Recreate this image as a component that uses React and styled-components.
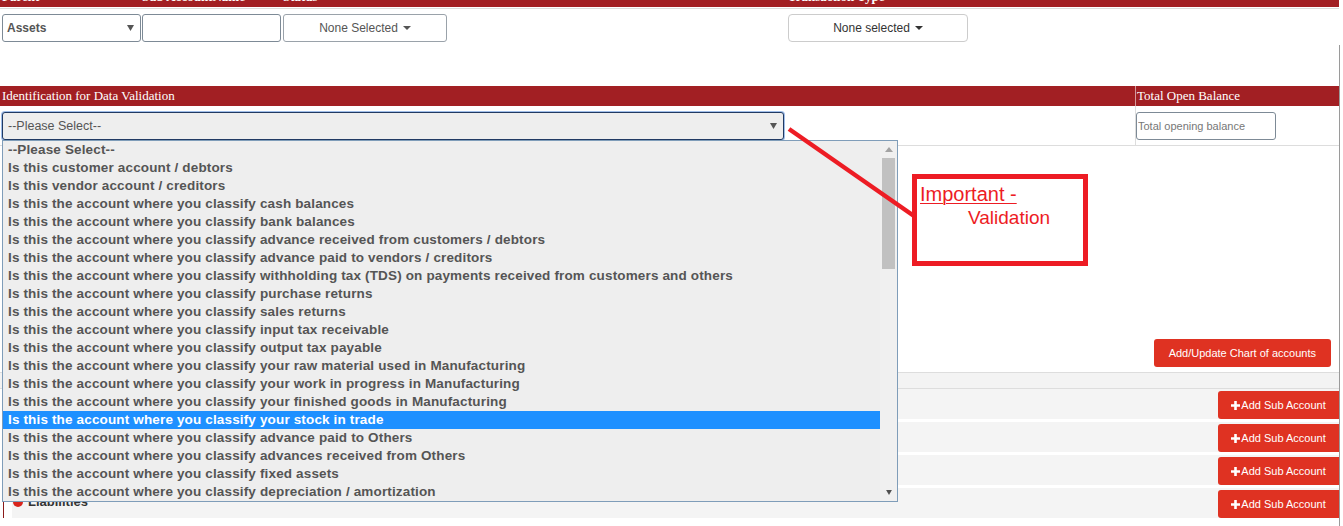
import React from "react";
import styled, { createGlobalStyle } from "styled-components";

const RED_BAR = "#a21f23";
const BTN_RED = "#df3222";
const ANNO = "#ed1c24";

const GlobalStyle = createGlobalStyle`
  html, body { margin: 0; padding: 0; background: #fff; }
  body { font-family: "Liberation Sans", Arial, sans-serif; overflow: hidden; }
  * { box-sizing: border-box; }
`;

const Page = styled.div`
  display: flex;
  width: 1343px;
  height: 526px;
  overflow: hidden;
`;

const Main = styled.div`
  position: relative;
  width: 1339px;
  flex: none;
`;

const Edge = styled.div`
  flex: 1;
  margin-top: 45px;
  border-left: 1px solid #9a9a9a;
`;

const TopHeader = styled.div`
  display: grid;
  grid-template-columns: 140px 141px 505px 1fr;
  height: 7px;
  padding-left: 2px;
  background: ${RED_BAR};
  overflow: hidden;
`;

const HeadLabel = styled.div`
  margin-top: -10px;
  font-family: "Liberation Serif", "Times New Roman", serif;
  font-size: 13px;
  font-weight: bold;
  line-height: 13px;
  color: #fff;
  white-space: nowrap;
`;

const FilterRow = styled.div`
  display: grid;
  grid-template-columns: 140px 141px 505px 1fr;
  align-items: start;
  margin-top: 1px;
  padding: 5px 0 44px 2px;
  border-top: 1px solid #dcdcdc;
`;

const SelectBox = styled.div`
  display: flex;
  align-items: center;
  justify-content: space-between;
  width: 139px;
  height: 28px;
  padding: 0 6px 0 4px;
  border: 1px solid #7d8a96;
  border-radius: 3px;
  background: #fff;
  font-size: 12px;
  font-weight: bold;
  color: #555;
`;

const TextInput = styled.input`
  width: 139px;
  height: 28px;
  border: 1px solid #7d8a96;
  border-radius: 3px;
  background: #fff;
  outline: none;
`;

const MultiButton = styled.button`
  display: flex;
  align-items: center;
  justify-content: center;
  width: ${(p) => p.$width}px;
  height: 28px;
  padding: 0;
  border: 1px solid ${(p) => (p.$dark ? "#cccccc" : "#9aa2aa")};
  border-radius: ${(p) => (p.$dark ? 4 : 3)}px;
  background: #fff;
  font-family: "Liberation Sans", Arial, sans-serif;
  font-size: 12px;
  color: ${(p) => (p.$dark ? "#333" : "#555")};
`;

const Caret = styled.span`
  display: inline-block;
  width: 0;
  height: 0;
  margin-left: 5px;
  border-top: 4px solid currentColor;
  border-left: 4px solid transparent;
  border-right: 4px solid transparent;
`;

const SectionBar = styled.div`
  display: grid;
  grid-template-columns: 1135px 1fr;
  height: 20px;
  background: ${RED_BAR};
  color: #fff;
  font-family: "Liberation Serif", "Times New Roman", serif;
  font-size: 13px;
  line-height: 20px;
`;

const SectionCell = styled.div`
  padding-left: ${(p) => (p.$divider ? 1 : 2)}px;
  border-left: ${(p) => (p.$divider ? "1px solid rgba(255,255,255,0.55)" : "none")};
  white-space: nowrap;
`;

const ValidationRow = styled.div`
  display: grid;
  grid-template-columns: 1135px 1fr;
  border-bottom: 1px solid #dddddd;
`;

const ValidationCell = styled.div`
  position: relative;
  padding: 6px 0 5px 2px;
`;

const BalanceCell = styled.div`
  padding: 6px 0 5px 0;
  border-left: 1px solid #dddddd;
`;

const FocusSelect = styled.div`
  display: flex;
  align-items: center;
  justify-content: space-between;
  width: 782px;
  height: 28px;
  padding: 0 6px 0 5px;
  border: 1px solid #213a63;
  border-radius: 3px;
  background: #eeeeee;
  box-shadow: 0 0 0 1px rgba(128, 168, 225, 0.75);
  font-size: 12.5px;
  color: #555;
`;

const BalanceInput = styled.input`
  width: 140px;
  height: 28px;
  padding: 0 0 0 1px;
  border: 1px solid #7d8a96;
  border-radius: 3px;
  font-family: "Liberation Sans", Arial, sans-serif;
  font-size: 11px;
  outline: none;
  &::placeholder { color: #777; }
`;

const OptionList = styled.div`
  position: absolute;
  left: 2px;
  top: 34px;
  z-index: 5;
  display: flex;
  width: 896px;
  height: 362px;
  border: 1px solid #7f9db9;
  background: #eeeeee;
`;

const Options = styled.ul`
  flex: 1;
  margin: 0;
  padding: 0;
  list-style: none;
  overflow: hidden;
`;

const Option = styled.li`
  height: 18px;
  padding-left: 5px;
  line-height: 18px;
  font-size: 13.5px;
  font-weight: bold;
  letter-spacing: 0.15px;
  white-space: nowrap;
  color: ${(p) => (p.$selected ? "#fff" : "#555")};
  background: ${(p) => (p.$selected ? "#1e90ff" : "transparent")};
`;

const ScrollBar = styled.div`
  display: flex;
  flex-direction: column;
  width: 17px;
  background: #f0f0f0;
`;

const ScrollArrow = styled.div`
  display: flex;
  align-items: center;
  justify-content: center;
  height: 17px;
  color: ${(p) => (p.$dim ? "#a3a3a3" : "#505050")};
`;

const ScrollTrack = styled.div`
  flex: 1;
`;

const ScrollThumb = styled.div`
  height: 111px;
  margin: 0 2px;
  background: #c1c1c1;
`;

const Toolbar = styled.div`
  display: flex;
  justify-content: flex-end;
  padding: 193px 8px 5px 0;
  border-bottom: 1px solid #dddddd;
`;

const PrimaryButton = styled.button`
  height: 28px;
  padding: 0 15px;
  border: none;
  border-radius: 3px;
  background: ${BTN_RED};
  color: #fff;
  font-family: "Liberation Sans", Arial, sans-serif;
  font-size: 11px;
`;

const TreeHead = styled.div`
  height: 16px;
  background: #f3f3f3;
  border-bottom: 1px solid #dddddd;
`;

const TreeBody = styled.div`
  display: flex;
  flex-direction: column;
  gap: 3px;
  margin-left: 3px;
  padding-left: 8px;
  border-left: 1px solid #8b1a1a;
`;

const TreeRow = styled.div`
  display: flex;
  justify-content: space-between;
  align-items: flex-start;
  height: 30px;
  padding-top: 2px;
  background: #f4f4f4;
`;

const TreeLabel = styled.div`
  display: flex;
  align-items: center;
  gap: 5px;
  margin-top: 4px;
  padding-left: 1px;
  font-size: 13px;
  font-weight: bold;
  line-height: 16px;
  color: #333;
`;

const TreeDot = styled.span`
  width: 10px;
  height: 10px;
  border-radius: 50%;
  background: #d9251d;
`;

const AddSubButton = styled.button`
  display: flex;
  align-items: center;
  justify-content: center;
  width: 121px;
  height: 28px;
  padding: 0;
  border: none;
  border-radius: 3px 0 0 3px;
  background: ${BTN_RED};
  color: #fff;
  font-family: "Liberation Sans", Arial, sans-serif;
  font-size: 11px;
`;

const ArrowLine = styled.svg`
  position: absolute;
  left: 0;
  top: 0;
  z-index: 6;
  pointer-events: none;
`;

const Callout = styled.div`
  position: absolute;
  left: 912px;
  top: 174px;
  z-index: 7;
  width: 176px;
  height: 92px;
  padding: 4px 0 0 3px;
  border: 5px solid ${ANNO};
  background: #fff;
  color: ${ANNO};
  font-family: "Liberation Sans", Arial, sans-serif;
  font-size: 20px;
  line-height: 23px;
`;

const CalloutTitle = styled.div`
  text-decoration: underline;
  text-underline-offset: 2px;
  text-decoration-thickness: 1px;
`;

const CalloutSub = styled.div`
  margin-left: 48px;
  font-size: 19px;
`;

const DownTri = ({ w = 7, h = 6 }) => (
  <svg width={w} height={h} viewBox="0 0 7 6">
    <path d="M0 0 H7 L3.5 6 Z" fill="currentColor" />
  </svg>
);

const UpTri = () => (
  <svg width="8" height="5" viewBox="0 0 8 5">
    <path d="M0 5 H8 L4 0 Z" fill="currentColor" />
  </svg>
);

const PlusIcon = () => (
  <svg width="9" height="9" viewBox="0 0 9 9" style={{ marginRight: 1 }}>
    <path d="M3.2 0 H5.8 V3.2 H9 V5.8 H5.8 V9 H3.2 V5.8 H0 V3.2 H3.2 Z" fill="#fff" />
  </svg>
);

const prefix = "Is this the account where you classify ";
const options = [
  "--Please Select--",
  "Is this customer account / debtors",
  "Is this vendor account / creditors",
  prefix + "cash balances",
  prefix + "bank balances",
  prefix + "advance received from customers / debtors",
  prefix + "advance paid to vendors / creditors",
  prefix + "withholding tax (TDS) on payments received from customers and others",
  prefix + "purchase returns",
  prefix + "sales returns",
  prefix + "input tax receivable",
  prefix + "output tax payable",
  prefix + "your raw material used in Manufacturing",
  prefix + "your work in progress in Manufacturing",
  prefix + "your finished goods in Manufacturing",
  prefix + "your stock in trade",
  prefix + "advance paid to Others",
  prefix + "advances received from Others",
  prefix + "fixed assets",
  prefix + "depreciation / amortization",
];

const treeRows = ["Assets", "Capital", "Income", "Liabilities"];

export default function App() {
  return (
    <>
      <GlobalStyle />
      <Page>
        <Main>
          <TopHeader>
            <HeadLabel>Parent</HeadLabel>
            <HeadLabel>Sub AccountName</HeadLabel>
            <HeadLabel>Status</HeadLabel>
            <HeadLabel>Transaction Type</HeadLabel>
          </TopHeader>

          <FilterRow>
            <SelectBox>
              <span>Assets</span>
              <DownTri />
            </SelectBox>
            <TextInput />
            <MultiButton $width={164}>
              None Selected <Caret />
            </MultiButton>
            <MultiButton $width={180} $dark>
              None selected <Caret />
            </MultiButton>
          </FilterRow>

          <SectionBar>
            <SectionCell>Identification for Data Validation</SectionCell>
            <SectionCell $divider>Total Open Balance</SectionCell>
          </SectionBar>

          <ValidationRow>
            <ValidationCell>
              <FocusSelect>
                <span>--Please Select--</span>
                <DownTri />
              </FocusSelect>
              <OptionList>
                <Options>
                  {options.map((o, i) => (
                    <Option key={i} $selected={i === 15}>
                      {o}
                    </Option>
                  ))}
                </Options>
                <ScrollBar>
                  <ScrollArrow $dim>
                    <UpTri />
                  </ScrollArrow>
                  <ScrollTrack>
                    <ScrollThumb />
                  </ScrollTrack>
                  <ScrollArrow>
                    <DownTri w={8} h={5} />
                  </ScrollArrow>
                </ScrollBar>
              </OptionList>
            </ValidationCell>
            <BalanceCell>
              <BalanceInput placeholder="Total opening balance" />
            </BalanceCell>
          </ValidationRow>

          <Toolbar>
            <PrimaryButton>Add/Update Chart of accounts</PrimaryButton>
          </Toolbar>
          <TreeHead />
          <TreeBody>
            {treeRows.map((r) => (
              <TreeRow key={r}>
                <TreeLabel>
                  <TreeDot />
                  {r}
                </TreeLabel>
                <AddSubButton>
                  <PlusIcon />
                  Add Sub Account
                </AddSubButton>
              </TreeRow>
            ))}
          </TreeBody>

          <ArrowLine width="1339" height="526">
            <line x1="789" y1="129" x2="914" y2="216" stroke={ANNO} strokeWidth="4.5" />
          </ArrowLine>
          <Callout>
            <CalloutTitle>Important -</CalloutTitle>
            <CalloutSub>Validation</CalloutSub>
          </Callout>
        </Main>
        <Edge />
      </Page>
    </>
  );
}
